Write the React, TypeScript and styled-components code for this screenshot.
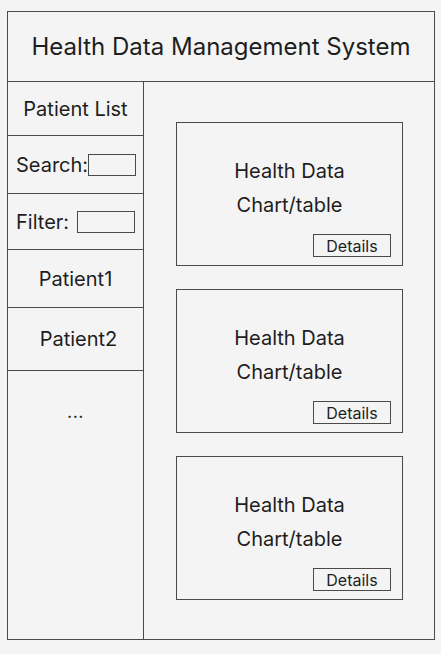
import React from "react";
import styled, { createGlobalStyle } from "styled-components";

const Global = createGlobalStyle`
  html, body { margin: 0; padding: 0; background: #f4f4f4; }
  body { font-family: Inter, "Noto Sans", sans-serif; color: #1e1e1e; }
`;

const Frame = styled.div`
  margin: 11px 0 0 7px;
  width: 428px;
  height: 629px;
  border: 1px solid #4a4a4a;
  display: flex;
  flex-direction: column;
  box-sizing: border-box;
`;

const Header = styled.header`
  height: 70px;
  flex: none;
  border-bottom: 1px solid #4a4a4a;
  display: flex;
  align-items: center;
  justify-content: center;
  font-size: 24px;
  box-sizing: border-box;
`;

const Body = styled.div`
  flex: 1;
  display: grid;
  grid-template-columns: 136px 1fr;
  min-height: 0;
`;

const Sidebar = styled.aside`
  border-right: 1px solid #4a4a4a;
  display: flex;
  flex-direction: column;
`;

const Row = styled.div<{ $h: number; $center?: boolean; $dx?: number }>`
  height: ${(p) => p.$h}px;
  flex: none;
  border-bottom: 1px solid #4a4a4a;
  box-sizing: border-box;
  display: flex;
  align-items: center;
  justify-content: ${(p) => (p.$center ? "center" : "flex-start")};
  padding: ${(p) => (p.$center ? `0 0 0 ${p.$dx ?? 0}px` : "0 0 0 8px")};
  font-size: 20px;
`;

const Rest = styled.div`
  flex: 1;
  display: flex;
  justify-content: center;
  padding-top: 30px;
  font-size: 18px;
  letter-spacing: 0.5px;
`;

const Field = styled.span<{ $w: number; $gap: number }>`
  display: inline-block;
  width: ${(p) => p.$w}px;
  height: 22px;
  margin-left: ${(p) => p.$gap}px;
  border: 1px solid #4a4a4a;
  box-sizing: border-box;
`;

const Main = styled.main`
  padding: 40px 0 0 32px;
  display: flex;
  flex-direction: column;
  gap: 23px;
`;

const Card = styled.section`
  width: 227px;
  height: 144px;
  border: 1px solid #4a4a4a;
  box-sizing: border-box;
  display: flex;
  flex-direction: column;
  align-items: center;
  padding-top: 31px;
  position: relative;
`;

const CardLine = styled.div`
  font-size: 20px;
  line-height: 34px;
`;

const DetailsButton = styled.div`
  position: absolute;
  right: 11px;
  bottom: 8px;
  width: 78px;
  height: 23px;
  border: 1px solid #4a4a4a;
  box-sizing: border-box;
  display: flex;
  align-items: center;
  justify-content: center;
  font-size: 16px;
`;

export default function App() {
  return (
    <>
      <Global />
      <Frame>
        <Header>Health Data Management System</Header>
        <Body>
          <Sidebar>
            <Row $h={54} $center>Patient List</Row>
            <Row $h={58}>
              Search:<Field $w={48} $gap={0} />
            </Row>
            <Row $h={56}>
              Filter:<Field $w={58} $gap={8} />
            </Row>
            <Row $h={58} $center>Patient1</Row>
            <Row $h={63} $center $dx={6}>Patient2</Row>
            <Rest>...</Rest>
          </Sidebar>
          <Main>
            {[0, 1, 2].map((i) => (
              <Card key={i}>
                <CardLine>Health Data</CardLine>
                <CardLine>Chart/table</CardLine>
                <DetailsButton>Details</DetailsButton>
              </Card>
            ))}
          </Main>
        </Body>
      </Frame>
    </>
  );
}
